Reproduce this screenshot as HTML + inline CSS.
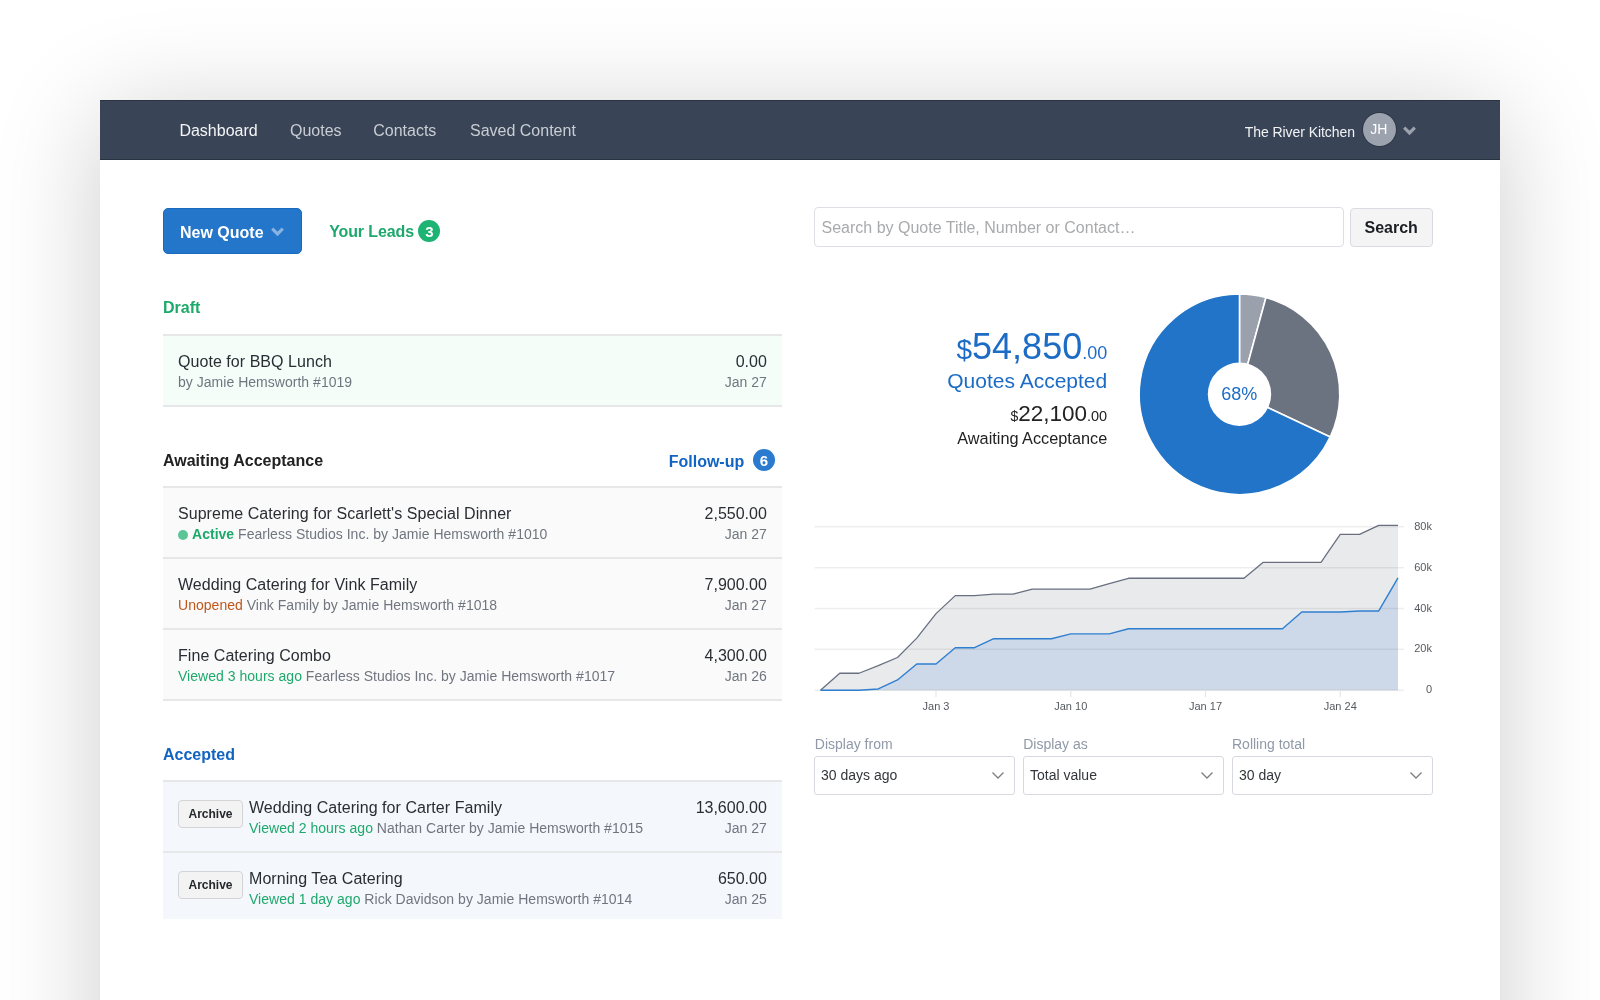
<!DOCTYPE html>
<html><head><meta charset="utf-8">
<style>
*{box-sizing:border-box;margin:0;padding:0}
html,body{width:1600px;height:1000px;overflow:hidden;background:#fff}
body{font-family:"Liberation Sans",sans-serif;position:relative;color:#2a2d31}
.win{position:absolute;left:100px;top:100px;width:1400px;height:1000px;background:#fff;box-shadow:0 14px 100px rgba(0,0,0,0.20)}
.a{position:absolute;white-space:nowrap;line-height:1}
.nav{position:absolute;left:100px;top:100px;width:1400px;height:60px;background:#394456;border-top:1px solid #2c3442;border-bottom:1px solid #2a3240}
.nl{font-size:16px;color:#c9cdd4}
.btn{position:absolute;left:163px;top:207.6px;width:139px;height:46.5px;background:#2376c9;border:1px solid #1a69c0;border-radius:5px}
.badge{position:absolute;width:22px;height:22px;border-radius:50%;color:#fff;font-weight:700;font-size:15px;line-height:23px;text-align:center}
.h{font-size:16px;font-weight:700}
.list{position:absolute;left:163px;width:619px}
.row{position:relative;height:71px;border-top:2px solid #e6e7e9}
.row .t{position:absolute;left:15px;top:17.7px;letter-spacing:0.05px;font-size:16px;line-height:1;white-space:nowrap;color:#2a2e34}
.row .s{position:absolute;left:15px;top:38.6px;letter-spacing:0.025px;font-size:14px;line-height:1;white-space:nowrap;color:#70767f}
.row .am{position:absolute;right:15.2px;top:17.7px;font-size:16px;line-height:1;white-space:nowrap;color:#2a2e34}
.row .dt{position:absolute;right:15.2px;top:38.6px;font-size:14px;line-height:1;white-space:nowrap;color:#70767f}
.green{color:#1ea96c}
.orange{color:#c0571b}
.arch{position:absolute;left:15px;top:17.5px;width:65px;height:28px;border:1px solid #d2d4d7;border-radius:4px;background:#f3f3f3;font-size:12px;font-weight:700;color:#24272b;text-align:center;line-height:26px}
.lbl{font-size:14px;color:#8f99a7}
.sel{position:absolute;top:755.5px;width:201px;height:39px;border:1.5px solid #d6dae0;border-radius:3px;background:#fff}
.sel span{position:absolute;left:6px;top:11.5px;font-size:14px;line-height:1;color:#33363a;white-space:nowrap}
.sel svg{position:absolute;right:9px;top:14px}
</style></head>
<body><div id="root" style="position:absolute;left:0;top:0;width:1600px;height:1000px;will-change:transform">
<div class="win"></div>
<div class="nav"></div>
<div class="a nl" style="left:179.4px;top:123px;color:#f4f5f7">Dashboard</div>
<div class="a nl" style="left:290px;top:123px">Quotes</div>
<div class="a nl" style="left:373.2px;top:123px">Contacts</div>
<div class="a nl" style="left:470px;top:123px">Saved Content</div>
<div class="a" style="left:1244.7px;top:124.6px;font-size:14px;color:#f2f3f5;letter-spacing:-0.06px">The River Kitchen</div>
<div style="position:absolute;left:1362.5px;top:113.2px;width:33px;height:33px;border-radius:50%;background:#9ca3af;box-shadow:0 0 0 1px #2f3846"></div>
<div class="a" style="left:1370.3px;top:122.3px;font-size:14px;color:#fff">JH</div>
<svg style="position:absolute;left:1401px;top:123px" width="17" height="14" viewBox="0 0 17 14"><path d="M3.2 4.6 L8.5 9.9 L13.8 4.6" fill="none" stroke="#9ba2ad" stroke-width="3.2"/></svg>

<!-- left column -->
<div class="btn"></div>
<div class="a" style="left:180px;top:224.5px;font-size:16px;font-weight:700;color:#fff">New Quote</div>
<svg style="position:absolute;left:269px;top:224.5px" width="17" height="14" viewBox="0 0 17 14"><path d="M3.2 3.6 L8.5 8.9 L13.8 3.6" fill="none" stroke="#88b2e2" stroke-width="3.2"/></svg>
<div class="a h green" style="left:329.2px;top:224.3px;letter-spacing:-0.12px">Your Leads</div>
<div class="badge" style="left:418.3px;top:220.2px;background:#1db372">3</div>

<div class="a h green" style="left:163px;top:299.5px">Draft</div>
<div class="list" style="top:334px">
  <div class="row" style="background:#f5fdf9;border-bottom:2px solid #e6e7e9;height:73px"><div class="t">Quote for BBQ Lunch</div><div class="s">by Jamie Hemsworth #1019</div><div class="am">0.00</div><div class="dt">Jan 27</div></div>
</div>

<div class="a h" style="left:163px;top:453.2px;color:#222">Awaiting Acceptance</div>
<div class="a h" style="left:668.7px;top:453.5px;color:#1264c2">Follow-up</div>
<div class="badge" style="left:752.9px;top:449.2px;background:#2a7bd0">6</div>

<div class="list" style="top:486px">
  <div class="row" style="background:#fafafb"><div class="t">Supreme Catering for Scarlett's Special Dinner</div><div class="s"><span style="display:inline-block;width:10px;height:10px;border-radius:50%;background:#5cc597;margin-right:4px;vertical-align:-1px"></span><b class="green">Active</b> Fearless Studios Inc. by Jamie Hemsworth #1010</div><div class="am">2,550.00</div><div class="dt">Jan 27</div></div>
  <div class="row" style="background:#fafafb"><div class="t">Wedding Catering for Vink Family</div><div class="s"><span class="orange">Unopened</span> Vink Family by Jamie Hemsworth #1018</div><div class="am">7,900.00</div><div class="dt">Jan 27</div></div>
  <div class="row" style="background:#fafafb;border-bottom:2px solid #e6e7e9;height:73px"><div class="t">Fine Catering Combo</div><div class="s"><span class="green">Viewed 3 hours ago</span> Fearless Studios Inc. by Jamie Hemsworth #1017</div><div class="am">4,300.00</div><div class="dt">Jan 26</div></div>
</div>

<div class="a h" style="left:163px;top:746.5px;color:#1264c2">Accepted</div>
<div class="list" style="top:780px">
  <div class="row" style="background:#f4f7fc"><div class="arch">Archive</div><div class="t" style="left:86px">Wedding Catering for Carter Family</div><div class="s" style="left:86px"><span class="green">Viewed 2 hours ago</span> Nathan Carter by Jamie Hemsworth #1015</div><div class="am">13,600.00</div><div class="dt">Jan 27</div></div>
  <div class="row" style="background:#f4f7fc;height:68px"><div class="arch">Archive</div><div class="t" style="left:86px">Morning Tea Catering</div><div class="s" style="left:86px"><span class="green">Viewed 1 day ago</span> Rick Davidson by Jamie Hemsworth #1014</div><div class="am">650.00</div><div class="dt">Jan 25</div></div>
</div>

<!-- right column -->
<div style="position:absolute;left:814px;top:207px;width:529.5px;height:40px;border:1.5px solid #dcdfe4;border-radius:4px;background:#fff"></div>
<div class="a" style="left:821.5px;top:220.4px;font-size:16px;color:#a9aaac">Search by Quote Title, Number or Contact…</div>
<div style="position:absolute;left:1350px;top:207.5px;width:83px;height:39px;border:1.5px solid #d8dce2;border-radius:4px;background:#f4f4f5"></div>
<div class="a" style="left:1364.5px;top:219.6px;font-size:16px;font-weight:700;color:#1b1e23">Search</div>

<div class="a" style="right:492.8px;top:329.4px;font-size:36px;color:#1c6cc6"><span style="font-size:28px">$</span>54,850<span style="font-size:18px">.00</span></div>
<div class="a" style="right:492.8px;top:370.1px;font-size:21px;color:#1c6cc6">Quotes Accepted</div>
<div class="a" style="right:492.8px;top:402.5px;font-size:22.5px;color:#222"><span style="font-size:14px">$</span>22,100<span style="font-size:14.5px">.00</span></div>
<div class="a" style="right:492.8px;top:429.8px;font-size:16.3px;color:#222">Awaiting Acceptance</div>

<svg style="position:absolute;left:1130px;top:285px" width="220" height="220" viewBox="0 0 220 220" id="pie"><path d="M109.5,109.2 L109.50,8.90 A100.3,100.3 0 0 1 135.97,12.45 Z" fill="#9aa1ac" stroke="#fff" stroke-width="1.6" stroke-linejoin="round"/><path d="M109.5,109.2 L135.97,12.45 A100.3,100.3 0 0 1 200.25,151.91 Z" fill="#6b7280" stroke="#fff" stroke-width="1.6" stroke-linejoin="round"/><path d="M109.5,109.2 L200.25,151.91 A100.3,100.3 0 1 1 109.50,8.90 Z" fill="#2174c8" stroke="#fff" stroke-width="1.6" stroke-linejoin="round"/><circle cx="109.5" cy="109.2" r="31.7" fill="#fff"/></svg>
<div class="a" style="left:1221.3px;top:384.6px;font-size:18px;color:#1c6cc6">68%</div>

<svg style="position:absolute;left:800px;top:500px" width="660" height="230" viewBox="800 500 660 230" id="chart"><polygon points="820.50,690.20 839.75,673.25 859.00,673.25 878.25,665.69 897.50,657.52 916.75,638.12 936.00,613.61 955.25,595.63 974.50,595.63 993.75,594.20 1013.00,594.20 1032.25,589.10 1051.50,589.10 1070.75,589.10 1090.00,589.10 1109.25,583.58 1128.50,578.27 1147.75,578.27 1167.00,578.27 1186.25,578.27 1205.50,578.27 1224.75,578.27 1244.00,578.27 1263.25,562.34 1282.50,562.34 1301.75,562.34 1321.00,562.34 1340.25,534.36 1359.50,534.36 1378.75,525.37 1398.00,525.37 1398.00,690.2 820.5,690.2" fill="#e9eaec"/><polygon points="820.50,690.20 839.75,690.20 859.00,690.20 878.25,688.97 897.50,679.99 916.75,664.06 936.00,664.06 955.25,647.72 974.50,647.72 993.75,638.73 1013.00,638.73 1032.25,638.73 1051.50,638.73 1070.75,633.83 1090.00,633.83 1109.25,633.83 1128.50,628.72 1147.75,628.72 1167.00,628.72 1186.25,628.72 1205.50,628.72 1224.75,628.72 1244.00,628.72 1263.25,628.72 1282.50,628.72 1301.75,611.97 1321.00,611.97 1340.25,611.97 1359.50,610.95 1378.75,610.95 1398.00,577.86 1398.00,690.2 820.5,690.2" fill="#cdd9e8"/><line x1="814.5" y1="526.80" x2="1404" y2="526.80" stroke="rgba(0,0,0,0.065)" stroke-width="1.5"/><line x1="814.5" y1="567.65" x2="1404" y2="567.65" stroke="rgba(0,0,0,0.065)" stroke-width="1.5"/><line x1="814.5" y1="608.50" x2="1404" y2="608.50" stroke="rgba(0,0,0,0.065)" stroke-width="1.5"/><line x1="814.5" y1="649.35" x2="1404" y2="649.35" stroke="rgba(0,0,0,0.065)" stroke-width="1.5"/><line x1="814.5" y1="690.20" x2="1404" y2="690.20" stroke="rgba(0,0,0,0.065)" stroke-width="1.5"/><line x1="936.00" y1="690.2" x2="936.00" y2="697" stroke="#e6e6e6" stroke-width="1.2"/><text x="936.00" y="709.5" font-size="11" text-anchor="middle" fill="#555a60" font-family="Liberation Sans">Jan 3</text><line x1="1070.75" y1="690.2" x2="1070.75" y2="697" stroke="#e6e6e6" stroke-width="1.2"/><text x="1070.75" y="709.5" font-size="11" text-anchor="middle" fill="#555a60" font-family="Liberation Sans">Jan 10</text><line x1="1205.50" y1="690.2" x2="1205.50" y2="697" stroke="#e6e6e6" stroke-width="1.2"/><text x="1205.50" y="709.5" font-size="11" text-anchor="middle" fill="#555a60" font-family="Liberation Sans">Jan 17</text><line x1="1340.25" y1="690.2" x2="1340.25" y2="697" stroke="#e6e6e6" stroke-width="1.2"/><text x="1340.25" y="709.5" font-size="11" text-anchor="middle" fill="#555a60" font-family="Liberation Sans">Jan 24</text><polyline points="820.50,690.20 839.75,673.25 859.00,673.25 878.25,665.69 897.50,657.52 916.75,638.12 936.00,613.61 955.25,595.63 974.50,595.63 993.75,594.20 1013.00,594.20 1032.25,589.10 1051.50,589.10 1070.75,589.10 1090.00,589.10 1109.25,583.58 1128.50,578.27 1147.75,578.27 1167.00,578.27 1186.25,578.27 1205.50,578.27 1224.75,578.27 1244.00,578.27 1263.25,562.34 1282.50,562.34 1301.75,562.34 1321.00,562.34 1340.25,534.36 1359.50,534.36 1378.75,525.37 1398.00,525.37" fill="none" stroke="#687080" stroke-width="1.3" stroke-linejoin="round"/><polyline points="820.50,690.20 839.75,690.20 859.00,690.20 878.25,688.97 897.50,679.99 916.75,664.06 936.00,664.06 955.25,647.72 974.50,647.72 993.75,638.73 1013.00,638.73 1032.25,638.73 1051.50,638.73 1070.75,633.83 1090.00,633.83 1109.25,633.83 1128.50,628.72 1147.75,628.72 1167.00,628.72 1186.25,628.72 1205.50,628.72 1224.75,628.72 1244.00,628.72 1263.25,628.72 1282.50,628.72 1301.75,611.97 1321.00,611.97 1340.25,611.97 1359.50,610.95 1378.75,610.95 1398.00,577.86" fill="none" stroke="#2f7fd0" stroke-width="1.4" stroke-linejoin="round"/><text x="1432" y="529.80" font-size="11" text-anchor="end" fill="#555a60" font-family="Liberation Sans">80k</text><text x="1432" y="570.65" font-size="11" text-anchor="end" fill="#555a60" font-family="Liberation Sans">60k</text><text x="1432" y="611.50" font-size="11" text-anchor="end" fill="#555a60" font-family="Liberation Sans">40k</text><text x="1432" y="652.35" font-size="11" text-anchor="end" fill="#555a60" font-family="Liberation Sans">20k</text><text x="1432" y="693.20" font-size="11" text-anchor="end" fill="#555a60" font-family="Liberation Sans">0</text></svg>

<div class="a lbl" style="left:814.8px;top:737px">Display from</div>
<div class="a lbl" style="left:1023.2px;top:737px">Display as</div>
<div class="a lbl" style="left:1232px;top:737px">Rolling total</div>
<div class="sel" style="left:814px"><span>30 days ago</span><svg width="14" height="9" viewBox="0 0 14 9"><path d="M1.5 1.5 L7 7 L12.5 1.5" fill="none" stroke="#7a7d82" stroke-width="1.3"/></svg></div>
<div class="sel" style="left:1023px"><span>Total value</span><svg width="14" height="9" viewBox="0 0 14 9"><path d="M1.5 1.5 L7 7 L12.5 1.5" fill="none" stroke="#7a7d82" stroke-width="1.3"/></svg></div>
<div class="sel" style="left:1232px"><span>30 day</span><svg width="14" height="9" viewBox="0 0 14 9"><path d="M1.5 1.5 L7 7 L12.5 1.5" fill="none" stroke="#7a7d82" stroke-width="1.3"/></svg></div>
</div></body></html>
